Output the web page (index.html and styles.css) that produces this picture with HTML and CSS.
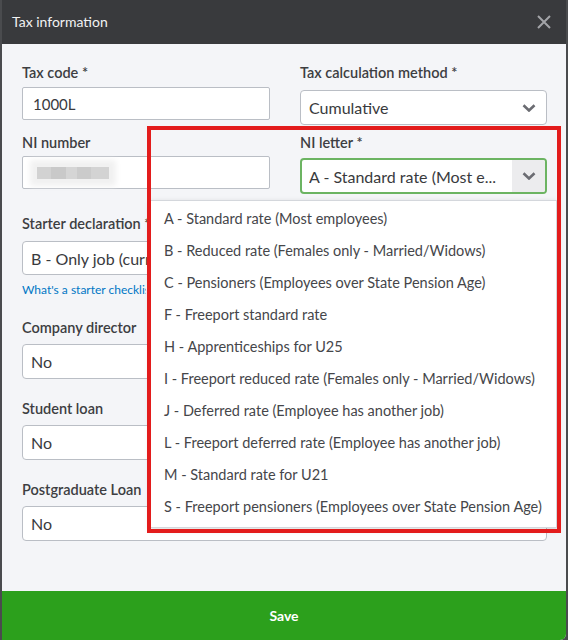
FILE: index.html
```html
<!DOCTYPE html>
<html>
<head>
<meta charset="utf-8">
<link rel="stylesheet" href="styles.css">
</head>
<body>
<div class="modal">
  <div class="header">
    <span class="title">Tax information</span>
    <svg class="close" width="14" height="14" viewBox="0 0 14 14"><path d="M1 1L13 13M13 1L1 13" stroke="#a3a4a8" stroke-width="2" fill="none"/></svg>
  </div>
  <div class="content">
    <div class="grid">
      <div class="field">
        <label class="lbl lbl-tight">Tax code *</label>
        <div class="input">1000L</div>
      </div>
      <div class="field">
        <label class="lbl">Tax calculation method *</label>
        <div class="select">
          <span class="val">Cumulative</span>
          <svg class="chev" width="14" height="8" viewBox="0 0 14 8"><path d="M1.5 1.2L7 6.5L12.5 1.2" stroke="#6b6c72" stroke-width="2.6" fill="none"/></svg>
        </div>
      </div>
      <div class="field">
        <label class="lbl lbl-ni">NI number</label>
        <div class="input"><span class="blurred"></span></div>
      </div>
      <div class="field">
        <label class="lbl lbl-letter">NI letter *</label>
        <div class="select focused">
          <span class="val">A - Standard rate (Most e...</span>
          <span class="chev-box"><svg width="14" height="8" viewBox="0 0 14 8"><path d="M1.5 1.2L7 6.5L12.5 1.2" stroke="#6b6c72" stroke-width="2.6" fill="none"/></svg></span>
        </div>
      </div>
    </div>

    <div class="full first">
      <label class="lbl">Starter declaration *</label>
      <div class="select"><span class="val clip">B - Only job (current tax year)</span>
        <svg class="chev" width="14" height="8" viewBox="0 0 14 8"><path d="M1.5 1.2L7 6.5L12.5 1.2" stroke="#6b6c72" stroke-width="2.6" fill="none"/></svg></div>
      <a class="link">What's a starter checklist?</a>
    </div>
    <div class="full">
      <label class="lbl">Company director</label>
      <div class="select"><span class="val">No</span>
        <svg class="chev" width="14" height="8" viewBox="0 0 14 8"><path d="M1.5 1.2L7 6.5L12.5 1.2" stroke="#6b6c72" stroke-width="2.6" fill="none"/></svg></div>
    </div>
    <div class="full">
      <label class="lbl">Student loan</label>
      <div class="select"><span class="val">No</span>
        <svg class="chev" width="14" height="8" viewBox="0 0 14 8"><path d="M1.5 1.2L7 6.5L12.5 1.2" stroke="#6b6c72" stroke-width="2.6" fill="none"/></svg></div>
    </div>
    <div class="full">
      <label class="lbl">Postgraduate Loan</label>
      <div class="select"><span class="val">No</span>
        <svg class="chev" width="14" height="8" viewBox="0 0 14 8"><path d="M1.5 1.2L7 6.5L12.5 1.2" stroke="#6b6c72" stroke-width="2.6" fill="none"/></svg></div>
    </div>
  </div>
  <div class="footer">Save</div>

  <ul class="menu">
    <li>A - Standard rate (Most employees)</li>
    <li>B - Reduced rate (Females only - Married/Widows)</li>
    <li>C - Pensioners (Employees over State Pension Age)</li>
    <li>F - Freeport standard rate</li>
    <li>H - Apprenticeships for U25</li>
    <li>I - Freeport reduced rate (Females only - Married/Widows)</li>
    <li>J - Deferred rate (Employee has another job)</li>
    <li>L - Freeport deferred rate (Employee has another job)</li>
    <li>M - Standard rate for U21</li>
    <li>S - Freeport pensioners (Employees over State Pension Age)</li>
  </ul>
  <div class="highlight"></div>
</div>
</body>
</html>
```
FILE: styles.css
```css
* { box-sizing: border-box; }
html, body { margin: 0; padding: 0; }
body {
  background: #4a4b4e;
  font-family: Lato, "Liberation Sans", sans-serif;
  color: #393a3d;
}
.modal {
  position: relative;
  margin: 0 2px;
  height: 640px;
  background: #f4f5f8;
  display: flex;
  flex-direction: column;
  border-radius: 0 0 6px 0;
  overflow: hidden;
}
.header {
  height: 44px;
  flex: none;
  background: #393a3d;
  display: flex;
  align-items: center;
  justify-content: space-between;
  padding: 0 15px 0 10px;
}
.title { color: #f2f2f2; font-size: 14px; margin-top: -2px; }
.close { display: block; }
.content {
  flex: 1;
  padding: 20px 19px 0 20px;
}
.grid {
  display: grid;
  grid-template-columns: 248px 247px;
  column-gap: 30px;
  row-gap: 9px;
}
.field { display: flex; flex-direction: column; }
.lbl {
  display: block;
  font-size: 14.5px;
  line-height: 18px;
  font-weight: 600;
  color: #3d3e42;
  margin-bottom: 8px;
}
.lbl-tight { margin-bottom: 5px; }
.lbl-ni { margin-bottom: 4px; }
.lbl-letter { margin-bottom: 6px; }
.input {
  height: 33px;
  background: #fff;
  border: 1px solid #babec5;
  border-radius: 2px;
  display: flex;
  align-items: center;
  padding-left: 10px;
  font-size: 15px;
  color: #393a3d;
}
.select {
  height: 35px;
  background: #fff;
  border: 1px solid #babec5;
  border-radius: 4px;
  display: flex;
  align-items: center;
  justify-content: space-between;
  padding: 0 10px 0 8px;
  font-size: 16px;
  color: #393a3d;
  overflow: hidden;
}
.val { white-space: nowrap; overflow: hidden; }
.val.clip { max-width: 116px; }
.chev { flex: none; display: block; }
.select.focused {
  height: 36px;
  border: 2px solid #6cb462;
  padding: 0 0 0 7px;
}
.chev-box {
  flex: none;
  width: 33px;
  height: 100%;
  background: #ececee;
  display: flex;
  align-items: center;
  justify-content: center;
}
.blurred {
  display: block;
  width: 72px;
  height: 12px;
  margin-left: 4px;
  background: linear-gradient(90deg, #d2d2d2 0 20%, #c9c9c9 20% 40%, #d5d5d5 40% 55%, #cbcbcb 55% 75%, #d3d3d3 75% 100%);
  box-shadow: 0 0 6px 7px #f1f1f1;
  filter: blur(0.6px);
}
.full { margin-top: 21px; }
.full .lbl { margin-bottom: 7px; }
.full.first .lbl { margin-bottom: 8px; }
.full.first .select { height: 34px; }
.link {
  display: block;
  margin-top: 7px;
  font-size: 12px;
  line-height: 16px;
  color: #0077c5;
  max-width: 124px;
  white-space: nowrap;
  overflow: hidden;
}
.footer {
  flex: none;
  height: 49px;
  background: #2ca01c;
  color: #fff;
  font-weight: 700;
  font-size: 14px;
  display: flex;
  align-items: center;
  justify-content: center;
}
.menu {
  position: absolute;
  left: 148px;
  top: 200px;
  width: 407px;
  height: 328px;
  margin: 0;
  padding: 2px 0 5px;
  list-style: none;
  background: #fff;
  border: 1px solid #d4d7dc;
  box-shadow: 0 2px 6px rgba(0,0,0,0.15);
}
.menu li {
  height: 32px;
  line-height: 32px;
  padding-left: 13px;
  font-size: 14.5px;
  color: #45464a;
  white-space: nowrap;
}
.highlight {
  position: absolute;
  left: 145px;
  top: 126px;
  width: 414px;
  height: 407px;
  border: 4px solid #e31c1c;
}
```
